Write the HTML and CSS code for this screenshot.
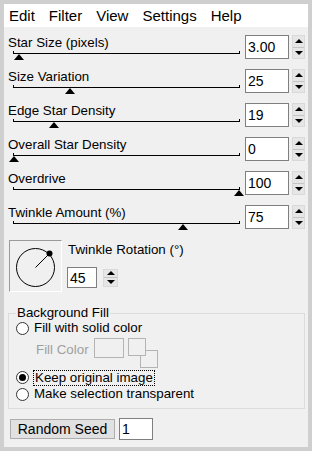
FILE: index.html
```html
<!DOCTYPE html>
<html lang="en">
<head>
  <meta charset="UTF-8">
  <title>Stars</title>
  <link rel="stylesheet" href="styles.css">
</head>
<body>
  <div class="window">
    <div class="menubar">
      <span>Edit</span>
      <span>Filter</span>
      <span>View</span>
      <span>Settings</span>
      <span>Help</span>
    </div>
    <div class="content">
      <div class="row">
        <div class="slider">
          <div class="label">Star Size (pixels)</div>
          <div class="track"><div class="thumb" style="left: 0px"></div></div>
        </div>
        <div class="field">
          <input class="num" type="text" value="3.00">
          <div class="spin"><div class="spin-up"></div><div class="spin-down"></div></div>
        </div>
      </div>
      <div class="row">
        <div class="slider">
          <div class="label">Size Variation</div>
          <div class="track"><div class="thumb" style="left: 51px"></div></div>
        </div>
        <div class="field">
          <input class="num" type="text" value="25">
          <div class="spin"><div class="spin-up"></div><div class="spin-down"></div></div>
        </div>
      </div>
      <div class="row">
        <div class="slider">
          <div class="label">Edge Star Density</div>
          <div class="track"><div class="thumb" style="left: 35px"></div></div>
        </div>
        <div class="field">
          <input class="num" type="text" value="19">
          <div class="spin"><div class="spin-up"></div><div class="spin-down"></div></div>
        </div>
      </div>
      <div class="row">
        <div class="slider">
          <div class="label">Overall Star Density</div>
          <div class="track"><div class="thumb" style="left: -5px"></div></div>
        </div>
        <div class="field">
          <input class="num" type="text" value="0">
          <div class="spin"><div class="spin-up"></div><div class="spin-down"></div></div>
        </div>
      </div>
      <div class="row">
        <div class="slider">
          <div class="label">Overdrive</div>
          <div class="track"><div class="thumb" style="left: 220px"></div></div>
        </div>
        <div class="field">
          <input class="num" type="text" value="100">
          <div class="spin"><div class="spin-up"></div><div class="spin-down"></div></div>
        </div>
      </div>
      <div class="row">
        <div class="slider">
          <div class="label">Twinkle Amount (%)</div>
          <div class="track"><div class="thumb" style="left: 164px"></div></div>
        </div>
        <div class="field">
          <input class="num" type="text" value="75">
          <div class="spin"><div class="spin-up"></div><div class="spin-down"></div></div>
        </div>
      </div>

      <div class="rotation">
        <div class="dial">
          <svg width="51" height="50" viewBox="0 0 51 50">
            <circle cx="25.5" cy="26.5" r="19" fill="none" stroke="#000" stroke-width="1"/>
            <line x1="25.5" y1="26.5" x2="39" y2="13" stroke="#000" stroke-width="1"/>
            <circle cx="39.5" cy="12.5" r="3" fill="#000"/>
          </svg>
        </div>
        <div class="rotation-bd">
          <div class="label rotation-label">Twinkle Rotation (&deg;)</div>
          <div class="rotation-field">
            <input class="num num-small" type="text" value="45">
            <div class="spin spin-small"><div class="spin-up"></div><div class="spin-down"></div></div>
          </div>
        </div>
      </div>

      <fieldset class="group">
        <legend class="group-title">Background Fill</legend>
        <div class="radio"><span class="radio-dot"></span><span>Fill with solid color</span></div>
        <div class="fill-row">
          <span class="fill-label">Fill Color</span>
          <span class="swatch"></span>
          <span class="swap">
            <span class="swap-front"></span>
            <span class="swap-back"></span>
          </span>
        </div>
        <div class="radio radio-focus"><span class="radio-dot checked"></span><span class="focus-text">Keep original image</span></div>
        <div class="radio"><span class="radio-dot"></span><span>Make selection transparent</span></div>
      </fieldset>

      <div class="seed-row">
        <button class="btn" type="button">Random Seed</button>
        <input class="num num-seed" type="text" value="1">
      </div>
    </div>
  </div>
</body>
</html>
```

FILE: styles.css
```css
*{
  margin: 0;
  padding: 0;
  box-sizing: border-box;
}
body{
  background: #cfcfcf;
  font: 13.33px "Liberation Sans", Arial, sans-serif;
  color: #000;
}
.window{
  width: 312px;
  height: 451px;
  border: 4px solid #cfcfcf;
  background: #f0f0f0;
}
.menubar{
  display: flex;
  gap: 14px;
  height: 23px;
  padding-left: 5px;
  background: #fff;
  font-size: 15px;
  line-height: 23px;
}
.content{
  padding: 7px 3px 0 4px;
}

/* slider rows */
.row{
  display: flex;
  height: 34px;
}
.slider{
  flex: 1;
  padding-top: 1px;
}
.label{
  height: 16px;
  line-height: 16px;
  white-space: nowrap;
}
.track{
  position: relative;
  height: 3px;
  margin: 0 5px;
  border: 1px solid #000;
  border-top: none;
}
.thumb{
  position: absolute;
  top: 3px;
  width: 0;
  height: 0;
  border-left: 5px solid transparent;
  border-right: 5px solid transparent;
  border-bottom: 6px solid #000;
}
.field{
  display: flex;
  gap: 3px;
  padding-top: 1px;
}
.num{
  width: 44px;
  height: 24px;
  padding-left: 2px;
  border: 1px solid #7f7f7f;
  background: #fff;
  font: 14px "Liberation Sans", Arial, sans-serif;
  color: #000;
  outline: none;
}
.spin{
  display: flex;
  flex-direction: column;
  width: 13px;
  height: 24px;
  border: 1px solid #d9d9d9;
  background: #e6e6e6;
}
.spin-up,
.spin-down{
  flex: 1;
  display: flex;
  align-items: center;
  justify-content: center;
}
.spin-down{
  border-top: 1px solid #c4c4c4;
}
.spin-up:before,
.spin-down:before{
  content: '';
  width: 0;
  height: 0;
  border-left: 4px solid transparent;
  border-right: 4px solid transparent;
}
.spin-up:before{
  border-bottom: 4px solid #000;
}
.spin-down:before{
  border-top: 4px solid #000;
}

/* rotation */
.rotation{
  display: flex;
  gap: 5px;
  height: 68px;
  padding: 2px 0 0 1px;
}
.dial{
  width: 53px;
  height: 52px;
  border: 1px solid #fff;
  border-top-color: #9a9a9a;
  border-left-color: #9a9a9a;
}
.rotation-bd{
  padding-top: 2px;
}
.rotation-label{
  padding-left: 1px;
}
.rotation-field{
  display: flex;
  align-items: center;
  gap: 6px;
  margin-top: 9px;
}
.num-small{
  width: 30px;
  height: 21px;
}
.spin-small{
  width: 15px;
  height: 18px;
}

/* background fill group */
.group{
  margin: 0;
  padding: 0 7px 6px 7px;
  border: 1px solid #dcdcdc;
}
.group-title{
  padding: 0 1px;
  line-height: 14px;
}
.radio{
  display: flex;
  align-items: center;
  gap: 5px;
  height: 16px;
  line-height: 16px;
}
.radio-dot{
  display: flex;
  align-items: center;
  justify-content: center;
  width: 13px;
  height: 13px;
  border: 1px solid #333;
  border-radius: 50%;
  background: #fff;
}
.radio-dot.checked:before{
  content: '';
  width: 7px;
  height: 7px;
  border-radius: 50%;
  background: #000;
}
.radio-focus{
  gap: 4px;
  height: 17px;
  margin-top: 1px;
}
.focus-text{
  padding: 0 1px;
  line-height: 14px;
  border: 1px dotted #000;
}
.fill-row{
  display: flex;
  align-items: flex-start;
  height: 32px;
  padding-left: 20px;
}
.fill-label{
  padding-top: 6px;
  line-height: 16px;
  color: #a0a0a0;
}
.swatch{
  width: 30px;
  height: 20px;
  margin: 2px 0 0 5px;
  border: 1px solid #b4b4b4;
}
.swap{
  display: grid;
  margin: 2px 0 0 4px;
}
.swap-front,
.swap-back{
  grid-area: 1 / 1;
  width: 18px;
  height: 18px;
  border: 1px solid #b4b4b4;
  background: #f0f0f0;
}
.swap-front{
  z-index: 1;
}
.swap-back{
  margin: 12px 0 0 12px;
}

/* seed */
.seed-row{
  display: flex;
  align-items: center;
  gap: 4px;
  margin-top: 9px;
  padding-left: 2px;
}
.btn{
  width: 105px;
  height: 20px;
  border: 1px solid #adadad;
  background: #e1e1e1;
  font: 14px "Liberation Sans", Arial, sans-serif;
  color: #000;
}
.num-seed{
  width: 34px;
  height: 22px;
}
```
